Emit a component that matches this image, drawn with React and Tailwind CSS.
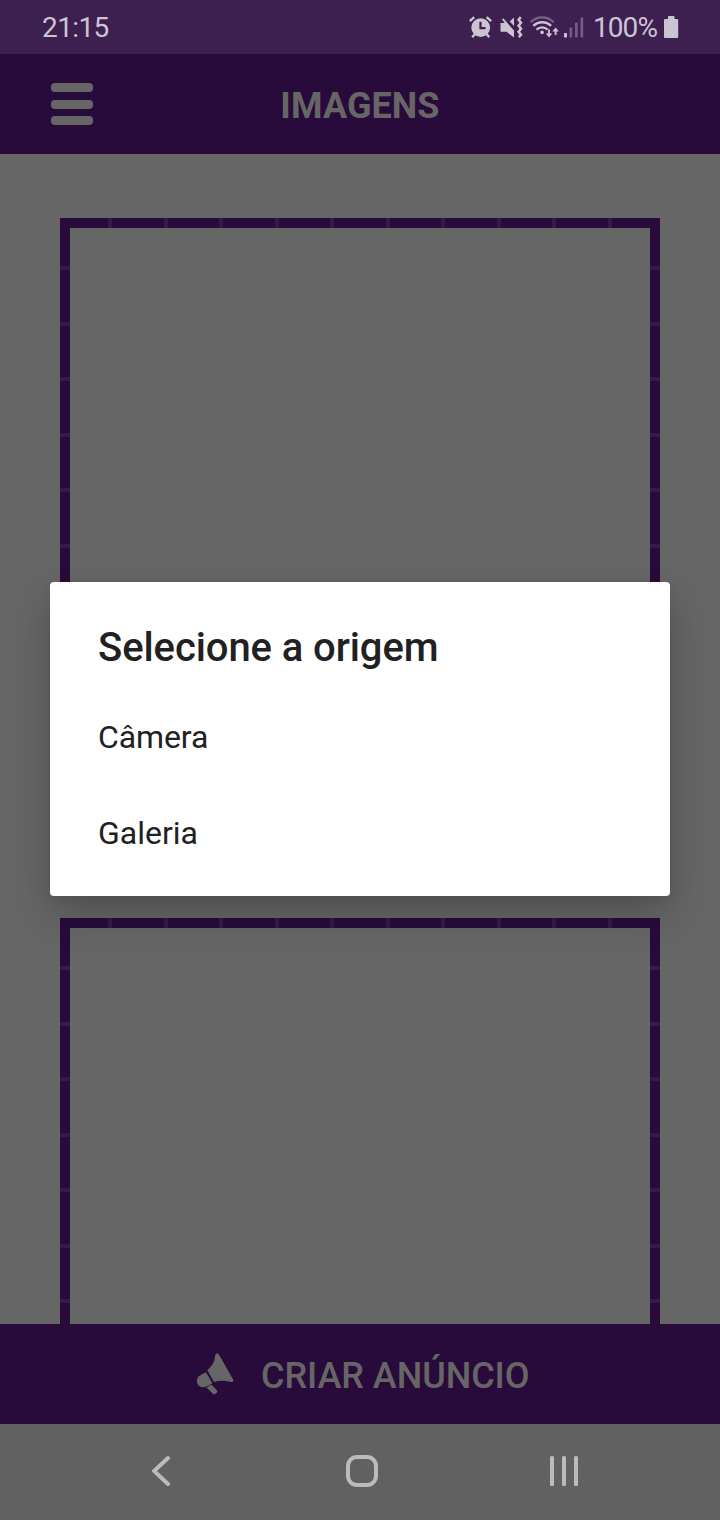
import React from "react";

const TICKS = Array.from({ length: 10 }, (_, i) => i);

function AlarmIcon() {
  return (
    <svg width="24" height="24" viewBox="0 0 24 24" fill="none" stroke="#cdc4d3" className="shrink-0">
      <path d="M.8 6.200 5.200 2.200M17.600 2.200l4.600 4" strokeWidth="2.400" />
      <path d="M6 19 3.200 22.200M17.600 19l2.600 3.200" strokeWidth="2.400" />
      <circle cx="11.700" cy="12.600" r="9.400" fill="#cdc4d3" stroke="none" />
      <path d="M11.500 6.800v6.400h5" stroke="#3d1f50" strokeWidth="2.200" />
    </svg>
  );
}

function MuteVibrateIcon() {
  return (
    <svg width="24" height="24" viewBox="0 0 24 24" fill="none" stroke="#cdc4d3" className="shrink-0">
      <path d="M.5 8H4.800L2 4.400 3.300 3.200 14 15.600V22.600L6.500 16.800H.5z" fill="#cdc4d3" stroke="none" />
      <path d="M14 2.400v8.600L9.800 6.400z" fill="#cdc4d3" stroke="none" />
      <path d="M20.800 2.200l-2.200 2.500 2.400 3-2.400 3 2.400 3-2.400 3 2.400 3-2.200 2.400" strokeWidth="2.500" />
    </svg>
  );
}

function WifiIcon() {
  return (
    <svg width="30" height="24" viewBox="0 0 30 24" fill="none" stroke="#cdc4d3" className="shrink-0">
      <path d="M.7 7.200C7 .7 17.300.7 23.700 7.200" stroke="#79628a" strokeWidth="2.300" />
      <path d="M3.300 10.900C8.300 6 16.200 6 21.100 10.900" strokeWidth="2.300" />
      <path d="M6.500 14.600c3.200-3 7.900-3 11.200 0" strokeWidth="2.300" />
      <circle cx="12.100" cy="17.400" r="1.800" fill="#cdc4d3" stroke="none" />
      <path d="M19 14.500v6.500M25.600 20v-5.500" strokeWidth="1.900" />
      <path d="M15.700 18.400h6.600L19 22.600zM22.300 16.600h6.600L25.600 12.400z" fill="#cdc4d3" stroke="none" />
    </svg>
  );
}

function SignalIcon() {
  return (
    <svg width="22" height="24" viewBox="0 0 22 24" className="shrink-0">
      <rect x="1" y="18" width="3" height="4.500" rx=".8" fill="#cdc4d3" />
      <rect x="6.500" y="12.500" width="2.700" height="10" rx=".8" fill="#755c84" />
      <rect x="12" y="7.500" width="2.700" height="15" rx=".8" fill="#755c84" />
      <rect x="17.500" y="2.500" width="2.700" height="20" rx=".8" fill="#755c84" />
    </svg>
  );
}

function BatteryIcon() {
  return (
    <svg width="15" height="22" viewBox="0 0 15 22" className="shrink-0" fill="#cdc4d3">
      <rect x="4" y="0" width="6.500" height="4" rx=".8" />
      <rect x="0" y="3" width="14.200" height="19" rx="1" />
    </svg>
  );
}

function MegaphoneIcon() {
  return (
    <svg width="38" height="42" viewBox="0 0 38 42" fill="#666" className="shrink-0">
      <path d="M19.200 2.300C19.500.3 21.900-.1 23.100 1.700L37 26.300C37.900 28 36.800 29.400 35.100 29C28.500 27.600 23.500 27.400 18 28.900L11.300 17.200C16.700 12.500 18.700 8.500 19.200 2.300Z" />
      <path d="M10 19.200 16.400 30.200C12 32.900 9.600 34 7 34.200C3.400 34.300.8 31.100.9 27.700 1 25.200 2.200 23.400 4.600 21.900Z" />
      <path d="M10.500 34.400 15.300 31.500 20.800 37.200C22.400 38.900 18.900 42.200 17.100 40.900Z" />
    </svg>
  );
}

function HorizontalEdge() {
  return (
    <div className="flex h-[10px] shrink-0 justify-between bg-[#290b3b] px-12">
      {TICKS.map((i) => (
        <div key={i} className="w-1 bg-[#361b46]" />
      ))}
    </div>
  );
}

function VerticalEdge() {
  return (
    <div className="-my-[10px] flex w-[10px] flex-col justify-between bg-[#290b3b] py-12">
      {TICKS.map((i) => (
        <div key={i} className="h-1 bg-[#361b46]" />
      ))}
    </div>
  );
}

function ImageFrame() {
  return (
    <div className="flex h-[600px] w-[600px] shrink-0 flex-col">
      <HorizontalEdge />
      <div className="flex flex-1 justify-between">
        <VerticalEdge />
        <VerticalEdge />
      </div>
      <HorizontalEdge />
    </div>
  );
}

function SourceDialog() {
  return (
    <div
      role="dialog"
      className="absolute top-[582px] left-[50px] flex h-[314px] w-[620px] flex-col rounded-[4px] bg-white px-12 text-[#212121] shadow-[0_18px_40px_rgba(0,0,0,0.22),0_2px_8px_rgba(0,0,0,0.06)]"
    >
      <h2 className="mt-[37px] h-[70px] text-[40px] leading-[58px] font-medium tracking-[-0.09px]">Selecione a origem</h2>
      <button className="h-24 text-left text-[32px] leading-[96px] tracking-[-0.1px]">Câmera</button>
      <button className="h-24 text-left text-[32px] leading-[96px]">Galeria</button>
    </div>
  );
}

export default function App() {
  return (
    <div className="relative flex h-[1520px] w-[720px] flex-col overflow-hidden bg-[#666] font-['Roboto',sans-serif]">
      <div className="flex h-[54px] shrink-0 items-center bg-[#3d1f50] pr-[41px] pl-[42px] text-[#cdc4d3]">
        <span className="pt-[2px] text-[28px] leading-[52px] tracking-[-0.6px]">21:15</span>
        <div className="ml-auto flex items-center">
          <AlarmIcon />
          <div className="ml-[7px] flex"><MuteVibrateIcon /></div>
          <div className="ml-[6px] flex"><WifiIcon /></div>
          <div className="ml-[3px] flex"><SignalIcon /></div>
          <span className="ml-[8px] pt-[2px] text-[28px] leading-[52px] tracking-[-0.9px]">100%</span>
          <div className="ml-[7px] flex"><BatteryIcon /></div>
        </div>
      </div>

      <header className="grid h-[100px] shrink-0 grid-cols-[1fr_auto_1fr] items-center bg-[#290b3b] px-[51px]">
        <div className="flex w-[42px] flex-col gap-[7.500px]">
          <div className="h-[9px] rounded-[4px] bg-[#666]" />
          <div className="h-[9px] rounded-[4px] bg-[#666]" />
          <div className="h-[9px] rounded-[4px] bg-[#666]" />
        </div>
        <h1 className="pt-1 text-[36px] leading-[96px] font-bold tracking-[0.1px] text-[#666]">IMAGENS</h1>
      </header>

      <main className="flex min-h-0 flex-1 flex-col items-center gap-[100px] overflow-hidden pt-16">
        <ImageFrame />
        <ImageFrame />
      </main>

      <footer className="flex h-[100px] shrink-0 items-center bg-[#290b3b] pl-[196px] text-[#666]">
        <MegaphoneIcon />
        <span className="ml-[27px] pt-1 text-[36px] leading-[96px] font-medium tracking-[-0.05px]">CRIAR ANÚNCIO</span>
      </footer>

      <nav className="flex h-24 shrink-0 items-center justify-between bg-[#616161] pr-[142px] pb-[2px] pl-[152px]">
        <svg width="20" height="32" viewBox="0 0 20 32" fill="none" stroke="#bbb" strokeWidth="4" strokeLinecap="round">
          <path d="M16 3 2 16 16 29" />
        </svg>
        <svg width="32" height="32" viewBox="0 0 32 32" fill="none" stroke="#bbb" strokeWidth="4" className="ml-[2px]">
          <rect x="2" y="2" width="28" height="28" rx="9" />
        </svg>
        <svg width="28" height="32" viewBox="0 0 28 32" fill="#bbb">
          <rect x="0" y="1" width="4" height="30" rx="1.500" />
          <rect x="12" y="1" width="4" height="30" rx="1.500" />
          <rect x="24" y="1" width="4" height="30" rx="1.500" />
        </svg>
      </nav>

      <SourceDialog />
    </div>
  );
}
